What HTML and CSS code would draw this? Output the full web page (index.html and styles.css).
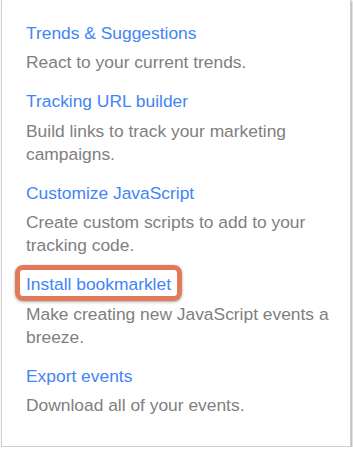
FILE: index.html
```html
<!DOCTYPE html>
<html lang="en">
<head>
<meta charset="utf-8">
<title>Tools</title>
<link rel="stylesheet" href="styles.css">
</head>
<body>
<div class="card">
  <div class="item">
    <a class="title" href="#">Trends &amp; Suggestions</a>
    <p class="desc">React to your current trends.</p>
  </div>
  <div class="item">
    <a class="title" href="#">Tracking URL builder</a>
    <p class="desc">Build links to track your marketing campaigns.</p>
  </div>
  <div class="item">
    <a class="title" href="#">Customize JavaScript</a>
    <p class="desc">Create custom scripts to add to your tracking code.</p>
  </div>
  <div class="item">
    <a class="title highlight" href="#">Install bookmarklet</a>
    <p class="desc">Make creating new JavaScript events a breeze.</p>
  </div>
  <div class="item">
    <a class="title" href="#">Export events</a>
    <p class="desc">Download all of your events.</p>
  </div>
</div>
</body>
</html>
```

FILE: styles.css
```css
html, body {
  margin: 0;
  padding: 0;
  background: #ffffff;
}

body {
  font-family: "Liberation Sans", Arial, sans-serif;
  font-size: 17.4px;
  line-height: 23px;
}

.card {
  box-sizing: border-box;
  width: 350px;
  margin-left: 1px;
  border: 1px solid #cfcfcf;
  border-top: none;
  box-shadow: 1px 1px 2px rgba(0, 0, 0, 0.35);
  padding: 21.5px 12px 29px 24px;
  display: flex;
  flex-direction: column;
  gap: 16px;
  background: #ffffff;
}

.item {
  display: flex;
  flex-direction: column;
  align-items: flex-start;
  gap: 6.5px;
}

.title {
  color: #4285f4;
  text-decoration: none;
}

.desc {
  margin: 0;
  color: #808080;
}

.highlight {
  position: relative;
}

.highlight::after {
  content: "";
  position: absolute;
  left: -11px;
  right: -11px;
  top: -8px;
  bottom: -5px;
  border: 5px solid #e07a58;
  border-radius: 8px;
  box-shadow: 0 1px 3px rgba(0, 0, 0, 0.35);
  pointer-events: none;
}
```
